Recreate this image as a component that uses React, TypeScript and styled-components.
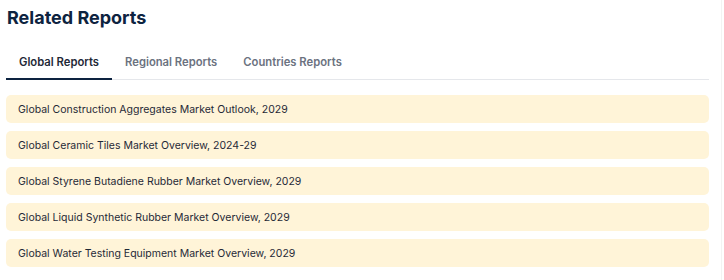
import React, { useState } from "react";
import styled, { createGlobalStyle } from "styled-components";

const Global = createGlobalStyle`
  html, body { margin: 0; padding: 0; background: #ffffff; }
  body { font-family: Inter, "Noto Sans", sans-serif; }
`;

const Page = styled.div`
  width: 722px;
  height: 280px;
  box-sizing: border-box;
  border-right: 1px solid #f3f3f3;
  padding: 6px 12px 0 6px;
`;

const Title = styled.h2`
  margin: 0;
  padding-left: 1px;
  font-size: 18px;
  line-height: 24px;
  font-weight: 700;
  color: #0d2340;
`;

const Tabs = styled.div`
  display: flex;
  margin-top: 16px;
  border-bottom: 1px solid #e5e7eb;
`;

const Tab = styled.button<{ $active: boolean }>`
  appearance: none;
  background: none;
  border: none;
  margin: 0 0 -1px 0;
  padding: 8px 13px 8px;
  font-family: inherit;
  font-size: 11.25px;
  line-height: 16px;
  font-weight: 600;
  cursor: pointer;
  color: ${(p) => (p.$active ? "#1f2937" : "#6b7280")};
  border-bottom: 2px solid ${(p) => (p.$active ? "#0d2340" : "transparent")};
`;

const List = styled.div`
  display: flex;
  flex-direction: column;
  gap: 8px;
  margin-top: 15px;
`;

const Item = styled.a`
  display: flex;
  align-items: center;
  height: 28px;
  padding: 0 12px;
  border-radius: 5px;
  background: #fff4d8;
  color: #1f2937;
  font-size: 10.5px;
  text-decoration: none;
`;

const tabs = ["Global Reports", "Regional Reports", "Countries Reports"];
const reports = [
  "Global Construction Aggregates Market Outlook, 2029",
  "Global Ceramic Tiles Market Overview, 2024-29",
  "Global Styrene Butadiene Rubber Market Overview, 2029",
  "Global Liquid Synthetic Rubber Market Overview, 2029",
  "Global Water Testing Equipment Market Overview, 2029",
];

export default function App() {
  const [active, setActive] = useState(0);
  return (
    <>
      <Global />
      <Page>
        <Title>Related Reports</Title>
        <Tabs>
          {tabs.map((t, i) => (
            <Tab key={t} $active={i === active} onClick={() => setActive(i)}>
              {t}
            </Tab>
          ))}
        </Tabs>
        <List>
          {reports.map((r) => (
            <Item key={r} href="#">
              {r}
            </Item>
          ))}
        </List>
      </Page>
    </>
  );
}
